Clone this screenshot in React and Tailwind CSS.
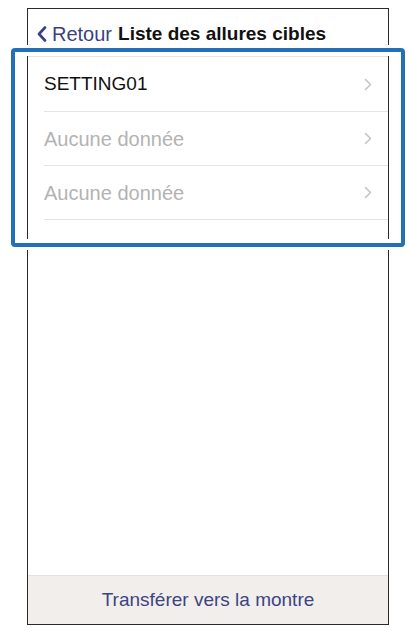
import { useState } from "react";

const rows = [
  { label: "SETTING01", empty: false },
  { label: "Aucune donnée", empty: true },
  { label: "Aucune donnée", empty: true },
];

const Chevron = ({ className }) => (
  <svg width="8" height="13" viewBox="0 0 8 13" className={className} fill="none">
    <path d="M1.5 1.5 L6.5 6.5 L1.5 11.5" stroke="currentColor" strokeWidth="1.6" strokeLinecap="round" strokeLinejoin="round" />
  </svg>
);

const BackArrow = () => (
  <svg width="10" height="16" viewBox="0 0 10 16" fill="none">
    <path d="M8 1.5 L2 8 L8 14.5" stroke="currentColor" strokeWidth="2.6" strokeLinecap="round" strokeLinejoin="round" />
  </svg>
);

export default function App() {
  const [selected, setSelected] = useState(null);

  return (
    <div className="relative w-[407px] h-[631px] bg-white overflow-hidden font-['Liberation_Sans',Arial,sans-serif]">
      {/* phone screen */}
      <div className="ml-[27px] mt-[8px] w-[362px] h-[617px] border-[1.5px] border-[#2b2b2b] flex flex-col bg-white">
        <div className="h-[48px] flex items-center pl-[9px] pt-[3px] border-b border-[#e4e4e4] shrink-0">
          <button type="button" className="flex items-center gap-[5px] text-[#3a3f86]">
            <BackArrow />
            <span className="text-[20px]">Retour</span>
          </button>
          <h1 className="ml-[6px] text-[19px] font-bold text-[#111]">Liste des allures cibles</h1>
        </div>

        <ul className="pl-[16px]">
          {rows.map((row, i) => (
            <li
              key={i}
              onClick={() => setSelected(i)}
              className={`flex items-center justify-between pr-[16px] border-b-[1.5px] border-[#e4e4e4] ${i === 0 ? "h-[55px]" : "h-[54px]"} ${selected === i ? "bg-gray-50" : ""}`}
            >
              <span className={row.empty ? "text-[20px] text-[#b3b3b3]" : "text-[19px] text-[#111]"}>{row.label}</span>
              <Chevron className="text-[#c4c4c4]" />
            </li>
          ))}
        </ul>

        <div className="flex-1" />

        <button
          type="button"
          className="h-[49px] shrink-0 bg-[#f2eeec] border-t border-[#e6e1de] text-[19px] text-[#3d4484] flex items-center justify-center"
        >
          Transférer vers la montre
        </button>
      </div>

      {/* highlight annotation */}
      <div className="absolute left-[11px] top-[48px] w-[394px] h-[199px] border-[4px] border-[#2270b8] rounded-[4px] shadow-[0_0_0_3px_#ffffff,inset_0_0_0_4px_#ffffff] pointer-events-none" />
    </div>
  );
}
